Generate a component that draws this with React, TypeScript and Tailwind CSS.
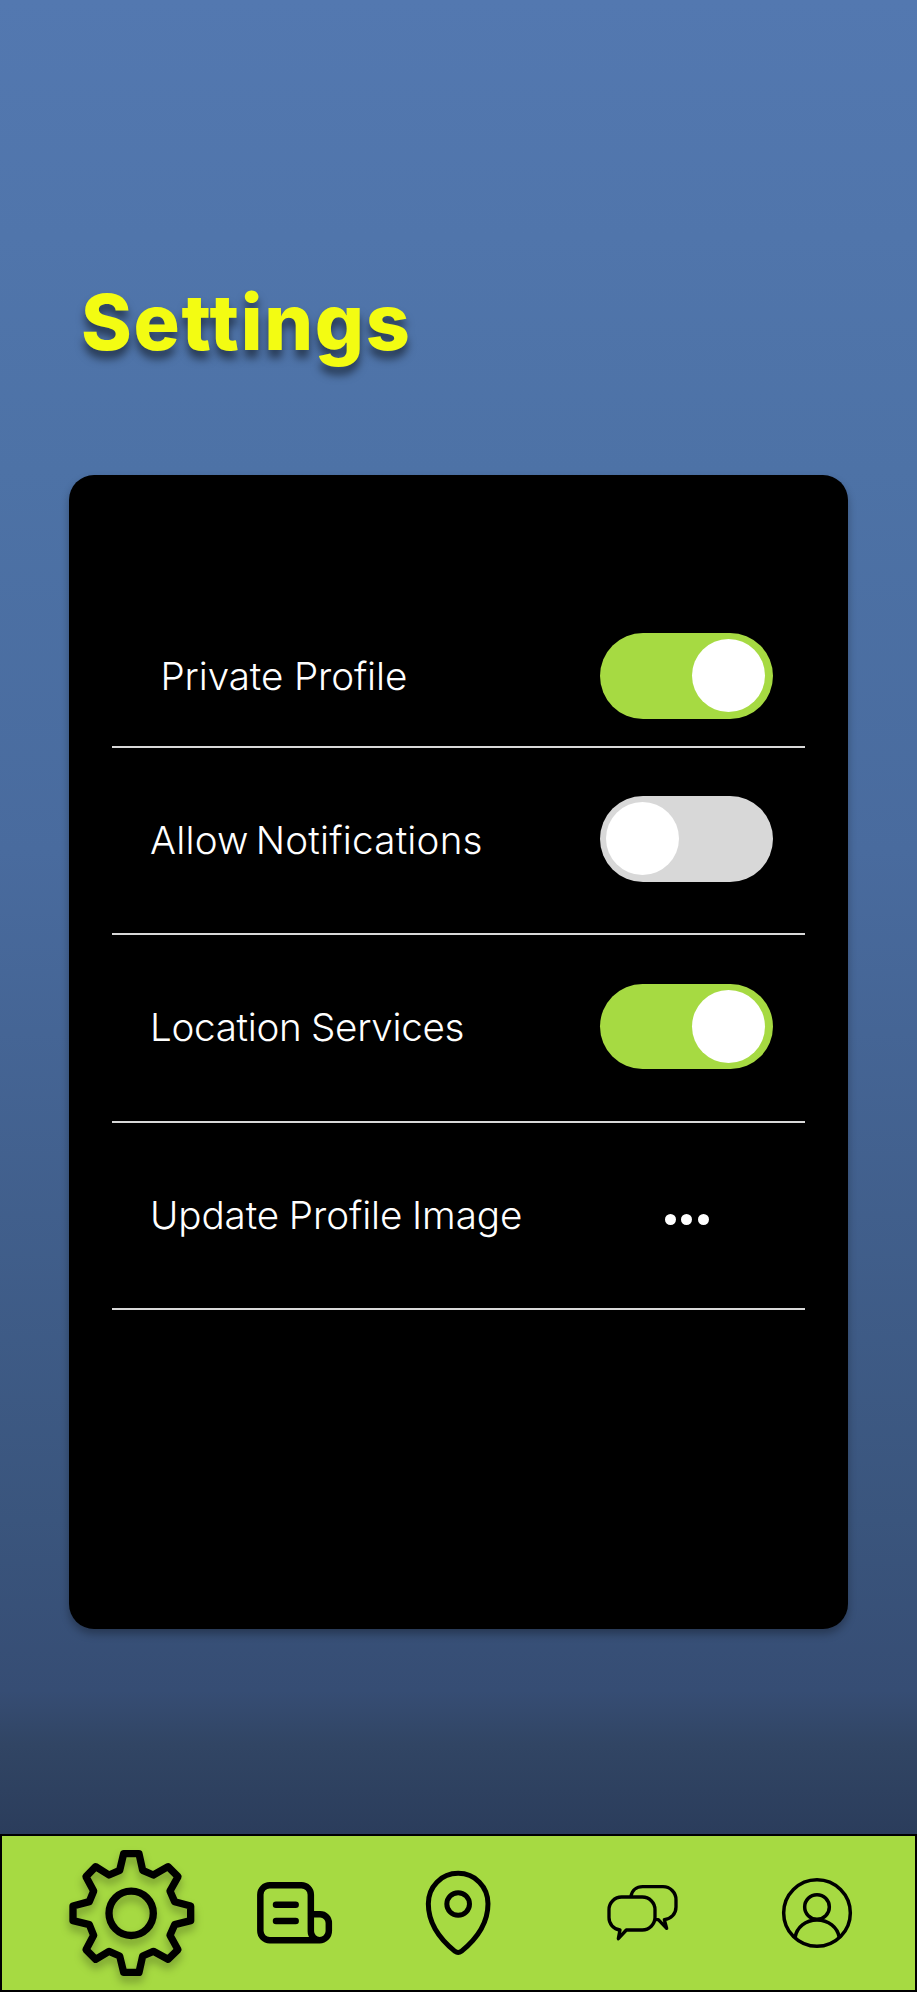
import React, { useState } from "react";

function GearIcon() {
  return (
    <svg
      viewBox="200 84 390 390"
      className="h-[130px] w-[130px] overflow-visible drop-shadow-[0_6px_4px_rgba(0,0,0,0.28)]"
      fill="none"
      stroke="black"
      strokeWidth="22"
      strokeLinejoin="round"
    >
      <path d="M370 101H416L427 151L459 165L503 140L533 170L509 213L523 245L571 258V302L523 314L509 346L533 389L503 418L459 394L427 408L416 457H370L358 408L326 394L286 418L257 389L280 346L267 314L218 302V258L267 245L280 213L257 170L286 140L326 165L358 151Z" />
      <circle cx="392.5" cy="280" r="66.5" />
    </svg>
  );
}

function NewsIcon() {
  return (
    <svg
      viewBox="74 91 240 196"
      className="h-[65.33px] w-[80px]"
      fill="none"
      stroke="black"
      strokeWidth="19.5"
      strokeLinecap="round"
      strokeLinejoin="round"
    >
      <path d="M268 271.5H118A28 28 0 0 1 90 243.5V135A28 28 0 0 1 118 107H213.5A28 28 0 0 1 241.5 135V245A26.5 26.5 0 0 0 268 271.5A27.5 27.5 0 0 0 295.5 244V220A26 26 0 0 0 269.5 194H242" />
      <path d="M137 165H196M137 214H196" />
    </svg>
  );
}

function PinIcon() {
  return (
    <svg
      viewBox="70 54 212 270"
      className="h-[90px] w-[70.67px]"
      fill="none"
      stroke="black"
      strokeWidth="15"
      strokeLinejoin="round"
    >
      <path d="M175.5 70C125 70 86 110 86 161C86 216 118 265 166 304Q175.5 311 185 304C233 265 265 216 265 161C265 110 226 70 175.5 70Z" />
      <circle cx="175.5" cy="162" r="34" />
    </svg>
  );
}

function ChatIcon() {
  return (
    <svg
      viewBox="74 100 226 178"
      className="h-[59.33px] w-[75.33px]"
      fill="none"
      stroke="black"
      strokeWidth="10"
      strokeLinejoin="round"
    >
      <path d="M124 142H186A38 38 0 0 1 224 180V203A38 38 0 0 1 186 241H138L114 267L119 241A37 37 0 0 1 86 203V180A38 38 0 0 1 124 142Z" />
      <path d="M152 140C155 122 168 111 187 111H248A39 39 0 0 1 287 150V172C287 193 272 208 252 210L259 236L234 210H224" />
    </svg>
  );
}

function ProfileIcon() {
  return (
    <svg
      viewBox="60 168 222 222"
      className="h-[74px] w-[74px]"
      fill="none"
      stroke="black"
      strokeWidth="10.5"
    >
      <circle cx="171" cy="279" r="100" />
      <circle cx="171" cy="261" r="37" />
      <path d="M105 353C110 322 137 300 171 300S233 322 238 353" />
    </svg>
  );
}

function Toggle({ initial }: { initial: boolean }) {
  const [on, setOn] = useState(initial);
  return (
    <button
      type="button"
      role="switch"
      aria-checked={on}
      onClick={() => setOn(!on)}
      className={`flex h-[85.5px] w-[173px] items-center rounded-full ${
        on ? "justify-end bg-[#a6da42] pr-[8px]" : "justify-start bg-[#d8d8d8] pl-[6px]"
      }`}
    >
      <span className="h-[73px] w-[73px] rounded-full bg-white" />
    </button>
  );
}

type RowProps = {
  label: string;
  className: string;
  labelClass: string;
  children: React.ReactNode;
};

function Row({ label, className, labelClass, children }: RowProps) {
  return (
    <div className={`flex items-center justify-between border-b-2 border-[#d8d8d8] pr-[31.5px] ${className}`}>
      <span className={`whitespace-nowrap text-[38.6px] leading-[48px] font-light text-white ${labelClass}`}>
        {label}
      </span>
      {children}
    </div>
  );
}

export default function App() {
  return (
    <div className="flex h-[1992px] w-[917px] flex-col overflow-hidden bg-[linear-gradient(180deg,#5378b0_0px,#4d72a6_470px,#496b9e_850px,#3a557d_1520px,#364d74_1690px,#314564_1745px,#2b3d5c_1834px)] font-['Inter',sans-serif]">
      <h1 className="ml-[81px] mt-[274px] h-[96px] whitespace-nowrap text-[77px] leading-[96px] font-extrabold tracking-[1.7px] text-[#f3fc12] [text-shadow:0_8px_8px_rgba(0,0,0,0.5)]">
        Settings
      </h1>
      <main className="ml-[69px] mt-[105px] h-[1154px] w-[779px] rounded-[25px] bg-black pl-[43px] pr-[43.5px] pt-[130px] shadow-[0_5px_8px_rgba(0,0,0,0.3)]">
        <Row label="Private Profile" className="h-[142.5px] pl-[48.5px] pt-px" labelClass="tracking-[-0.1px]">
          <Toggle initial={true} />
        </Row>
        <Row
          label="Allow Notifications"
          className="h-[187.5px] pb-[3px] pl-[38px]"
          labelClass="pt-[2px] tracking-[0.22px] [word-spacing:-4px]"
        >
          <Toggle initial={false} />
        </Row>
        <Row
          label="Location Services"
          className="h-[187.5px] pb-[3px] pl-[38px]"
          labelClass="pt-[2px] tracking-[-0.3px] [word-spacing:-1px]"
        >
          <Toggle initial={true} />
        </Row>
        <Row
          label="Update Profile Image"
          className="h-[187.5px] pl-[38px]"
          labelClass="tracking-[-0.08px] [word-spacing:-1px]"
        >
          <button type="button" aria-label="More" className="mr-[64px] mt-[8px] flex gap-[5.7px]">
            <span className="h-[11px] w-[11px] rounded-full bg-white" />
            <span className="h-[11px] w-[11px] rounded-full bg-white" />
            <span className="h-[11px] w-[11px] rounded-full bg-white" />
          </button>
        </Row>
      </main>
      <nav className="mt-auto flex h-[158px] items-center border-2 border-black bg-[#a6da42] pl-[64.67px]">
        <GearIcon />
        <span className="ml-[58px]"><NewsIcon /></span>
        <span className="ml-[88.67px]"><PinIcon /></span>
        <span className="ml-[110.67px]"><ChatIcon /></span>
        <span className="ml-[100px]"><ProfileIcon /></span>
      </nav>
    </div>
  );
}
